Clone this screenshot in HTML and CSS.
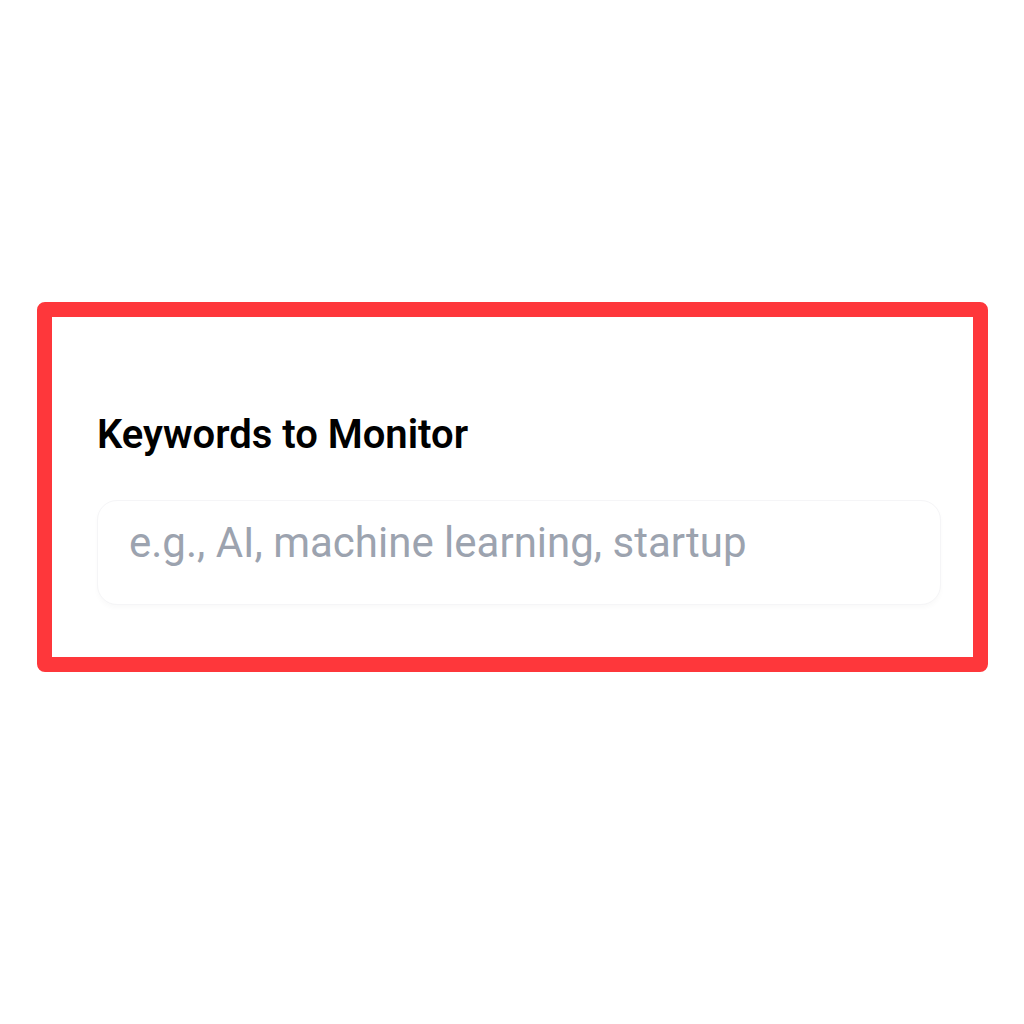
FILE: index.html
```html
<!DOCTYPE html>
<html lang="en">
<head>
    <meta charset="UTF-8">
    <meta name="viewport" content="width=device-width, initial-scale=1.0">
    <title>Keywords</title>
    <link rel="stylesheet" href="styles.css">
</head>
<body>
    <div class="frame">
        <div class="field">
            <label class="field-label" for="keywords">Keywords to Monitor</label>
            <input id="keywords" class="field-input" type="text" placeholder="e.g., AI, machine learning, startup">
        </div>
    </div>
</body>
</html>
```

FILE: styles.css
```css
body {
    font-family: Roboto, "Noto Sans", sans-serif;
    margin: 0;
    padding: 302px 36px 0 37px;
    background: #fff;
}
.frame {
    border: 15px solid #fe373b;
    border-radius: 8px;
    height: 340px;
    box-sizing: content-box;
    padding: 0 32px 0 45px;
}
.field {
    display: flex;
    flex-direction: column;
    padding-top: 94px;
}
.field-label {
    font-size: 40px;
    font-weight: 600;
    color: #000;
    line-height: 48px;
}
.field-input {
    margin-top: 41px;
    height: 105px;
    box-sizing: border-box;
    border: 1px solid #f5f5f7;
    border-radius: 20px;
    box-shadow: 0 3px 5px rgba(0, 0, 0, 0.025);
    padding: 0 30px 20px 31px;
    font-family: Roboto, sans-serif;
    font-size: 42px;
    color: #333;
    outline: none;
}
.field-input::placeholder {
    color: #9ca3af;
}
```
